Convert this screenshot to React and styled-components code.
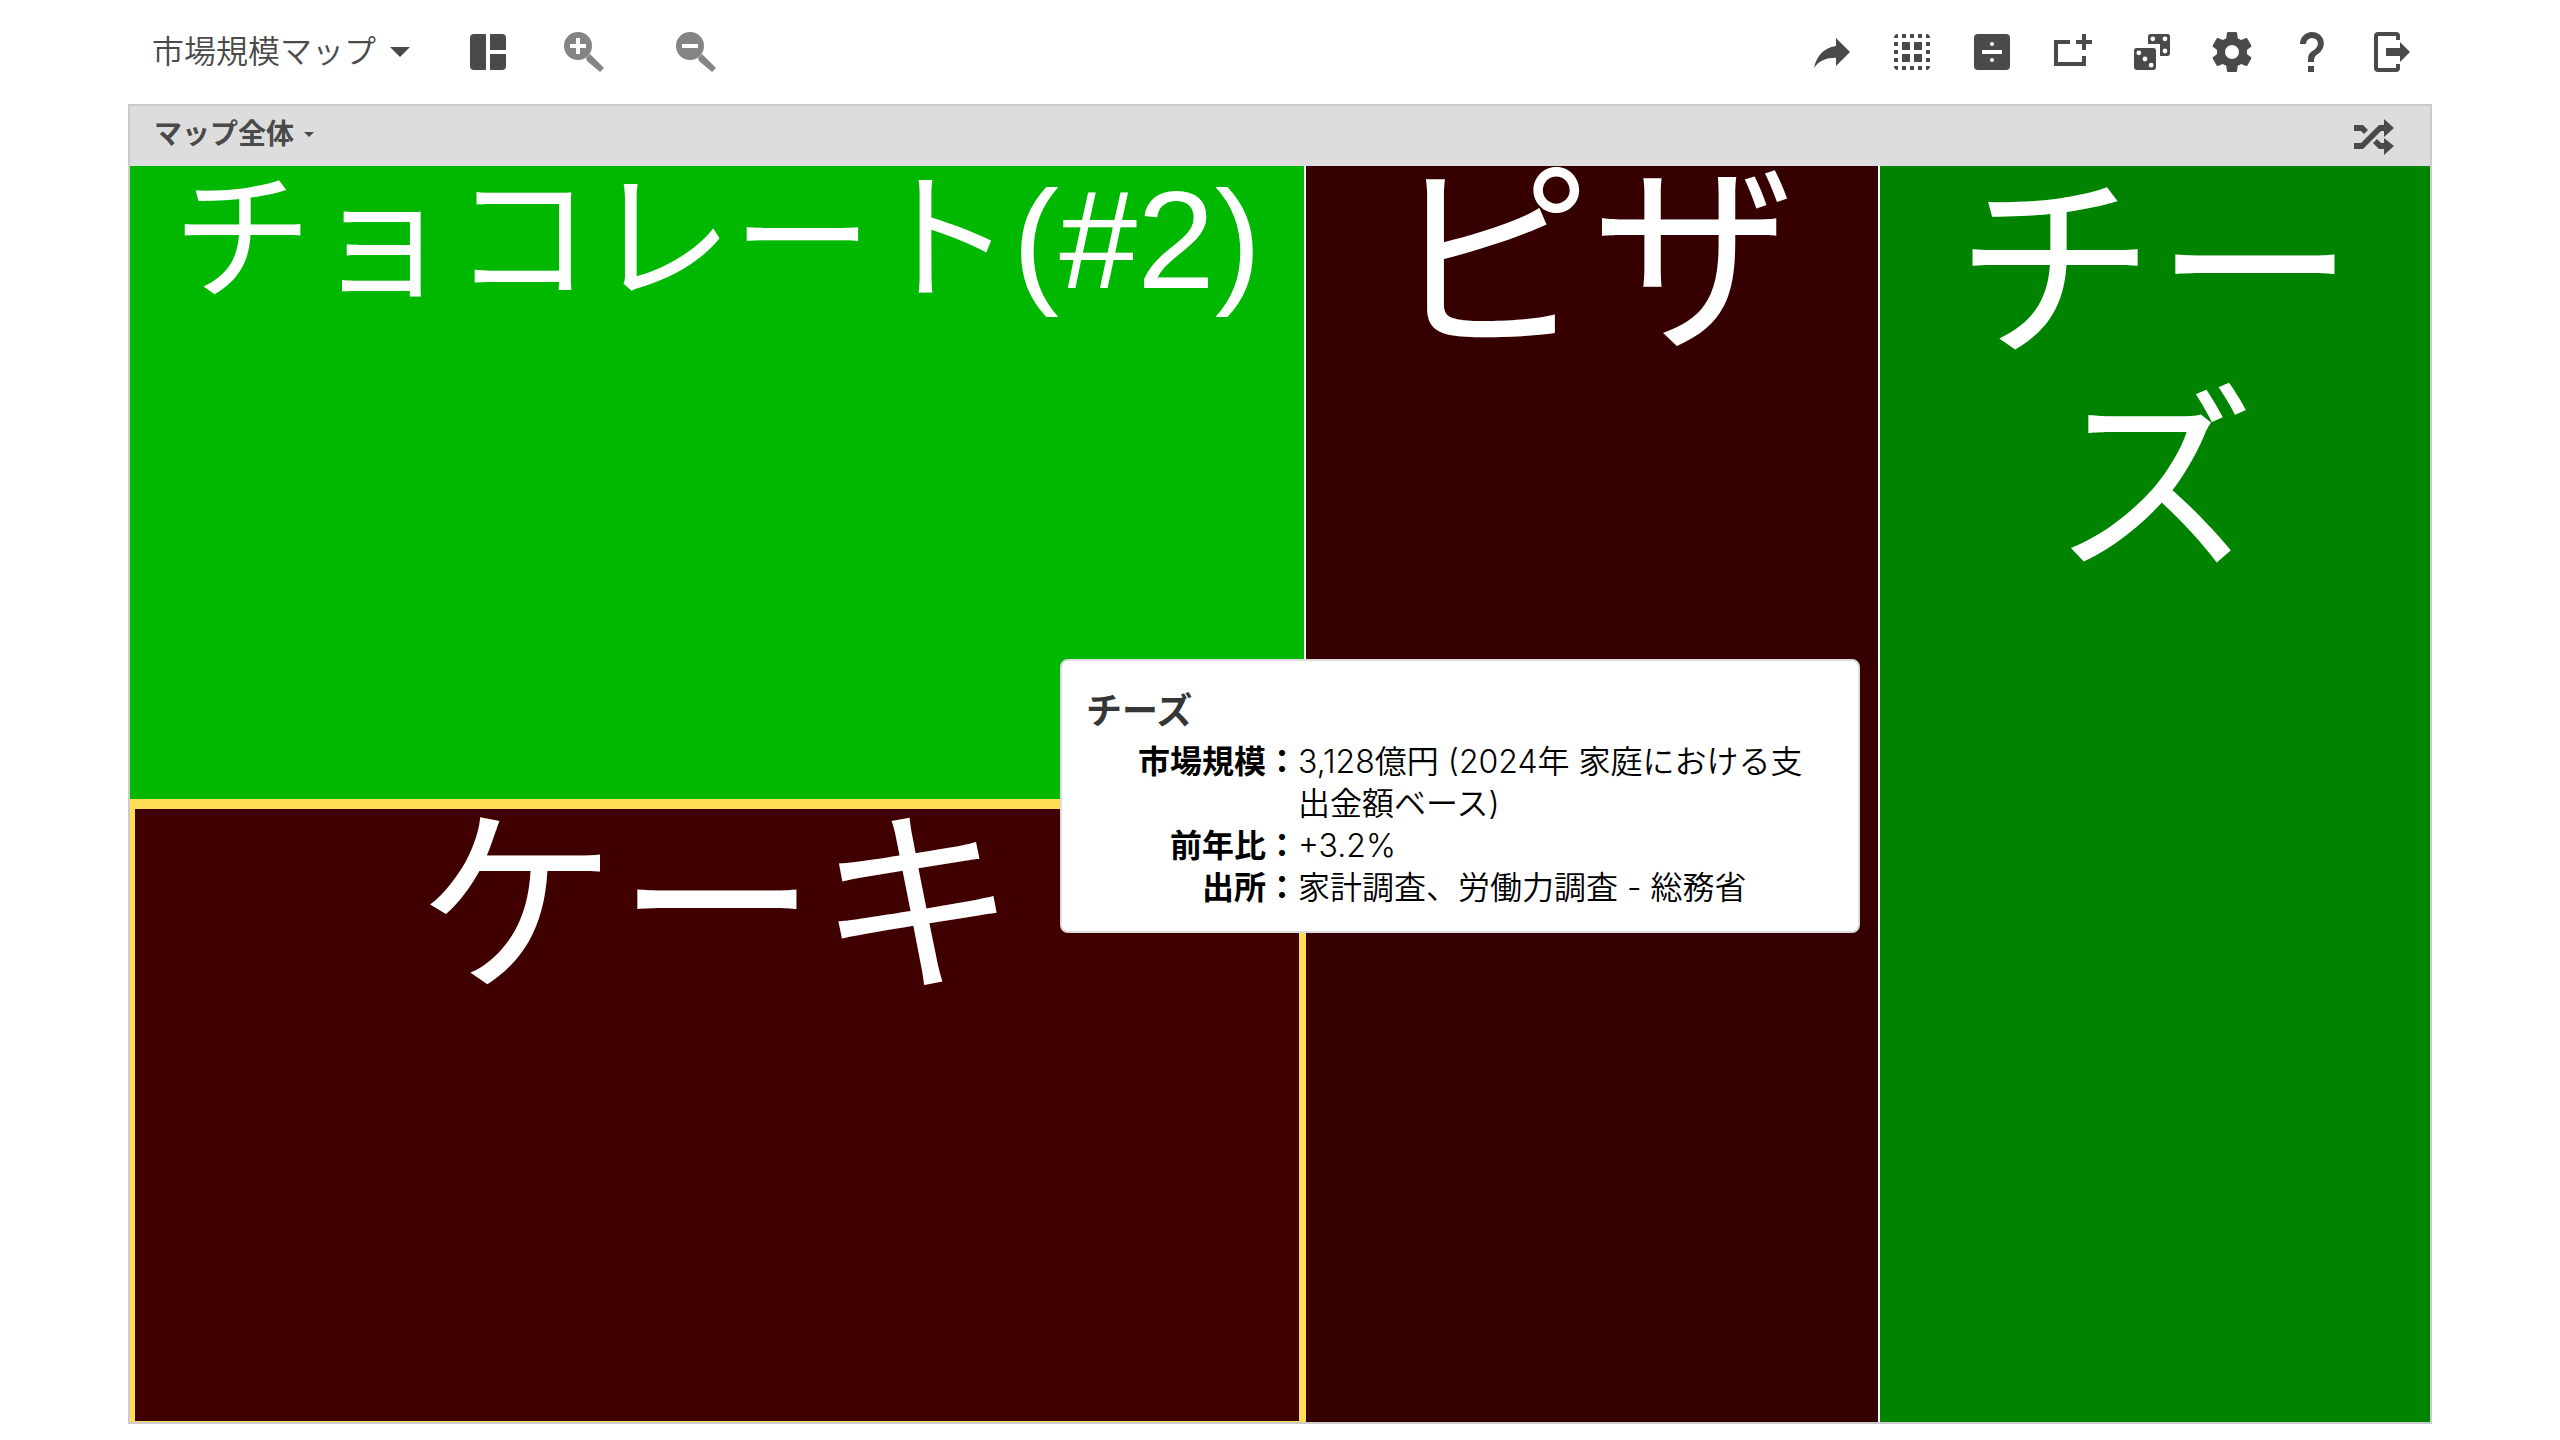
import React, { useState } from 'react';
import styled, { createGlobalStyle } from 'styled-components';

const GlobalStyle = createGlobalStyle`
  * {
    box-sizing: border-box;
  }

  body {
    margin: 0;
    background: #fff;
    color: #4a4a4a;
    font-family: Inter, 'Noto Sans CJK JP', sans-serif;
  }
`;

const Page = styled.div`
  display: flex;
  flex-direction: column;
  width: 90%;
  height: 100vh;
  margin: 0 auto;
  padding-bottom: 16px;
`;

const Toolbar = styled.header`
  display: flex;
  flex: none;
  align-items: center;
  justify-content: space-between;
  height: 104px;
  padding: 0 16px 0 24px;
`;

const ToolGroup = styled.div`
  display: flex;
  align-items: center;
  gap: ${(props) => props.$gap || 0}px;
`;

const PlainButton = styled.button`
  display: flex;
  align-items: center;
  padding: 0;
  border: none;
  background: none;
  color: inherit;
  font-family: inherit;
  cursor: pointer;
`;

const TitleButton = styled(PlainButton)`
  gap: 14px;
  margin-right: 54px;
  font-size: 32px;
  font-weight: 350;
  line-height: 48px;
`;

const IconButton = styled(PlainButton)`
  color: ${(props) => (props.$muted ? '#848484' : '#4a4a4a')};
`;

const Caret = styled.span`
  border: ${(props) => props.$size}px solid transparent;
  border-top-color: currentColor;
  border-bottom: none;
`;

const Frame = styled.main`
  display: flex;
  flex: 1;
  flex-direction: column;
  min-height: 0;
  border: 2px solid #ccc;
`;

const FrameHeader = styled.div`
  display: flex;
  flex: none;
  align-items: center;
  justify-content: space-between;
  height: 60px;
  padding: 0 32px 0 24px;
  background: #ddd;
`;

const ScopeButton = styled(PlainButton)`
  gap: 10px;
  padding-bottom: 4px;
  font-size: 28px;
  font-weight: 700;
  line-height: 40px;
`;

const TreeMap = styled.div`
  position: relative;
  display: grid;
  flex: 1;
  grid-template-columns: 1176fr 574fr 550fr;
  min-height: 0;
`;

const Column = styled.div`
  display: grid;
  grid-template-rows: 633fr 623fr;
  min-height: 0;
`;

const Tile = styled.button`
  display: flex;
  align-items: flex-start;
  justify-content: center;
  min-width: 0;
  min-height: 0;
  padding: 0 ${(props) => props.$inset || 0}px;
  border: 0 solid #fff;
  border-right-width: ${(props) => (props.$last ? 0 : 2)}px;
  background: ${(props) => props.$color};
  color: #fff;
  font-family: 'Liberation Sans', 'Noto Sans CJK JP', sans-serif;
  font-size: ${(props) => props.$size}px;
  font-weight: 400;
  line-height: ${(props) => props.$line}px;
  text-align: center;
  word-break: break-all;
  cursor: pointer;
`;

const SelectedTile = styled(Tile)`
  border-color: #ffdd57;
  border-width: 10px 7px 1px 5px;
`;

const Tooltip = styled.section`
  position: absolute;
  top: 493px;
  left: 930px;
  width: 800px;
  padding: 24px 24px 22px;
  border: 2px solid #ddd;
  border-radius: 8px;
  background: #fff;
  color: #000;
`;

const TooltipTitle = styled.h2`
  margin: 0 0 4px;
  color: #363636;
  font-size: 36px;
  font-weight: 700;
  line-height: 52px;
`;

const Facts = styled.dl`
  display: grid;
  grid-template-columns: 212px 1fr;
  margin: 0;
  font-size: 32px;
  line-height: 42px;

  dt {
    font-weight: 700;
    text-align: right;
  }

  dd {
    margin: 0;
    font-weight: 350;
  }
`;

const icons = {
  layout: <path d="M5 3H11V21H5A2 2 0 0 1 3 19V5A2 2 0 0 1 5 3M13 3H19A2 2 0 0 1 21 5V11H13V3M13 13H21V19A2 2 0 0 1 19 21H13V13Z" />,
  share: <path d="M21 12L14 5V9C7 10 4 15 3 20C5.5 16.4 9 14.9 14 14.9V19L21 12Z" />,
  selectAll: (
    <path d="M5 3V5H3A2 2 0 0 1 5 3M7 3H9V5H7V3M11 3H13V5H11V3M15 3H17V5H15V3M19 3A2 2 0 0 1 21 5H19V3M3 7H5V9H3V7M19 7H21V9H19V7M3 11H5V13H3V11M19 11H21V13H19V11M3 15H5V17H3V15M19 15H21V17H19V15M3 19H5V21A2 2 0 0 1 3 19M7 19H9V21H7V19M11 19H13V21H11V19M15 19H17V21H15V19M19 19H21A2 2 0 0 1 19 21V19M7 7H11V11H7V7M13 7H17V11H13V7M7 13H11V17H7V13M13 13H17V17H13V13Z" />
  ),
  divide: (
    <path d="M5 3H19A2 2 0 0 1 21 5V19A2 2 0 0 1 19 21H5A2 2 0 0 1 3 19V5A2 2 0 0 1 5 3M7 11V13H17V11H7M12 7A1 1 0 0 0 12 9A1 1 0 0 0 12 7M12 15A1 1 0 0 0 12 17A1 1 0 0 0 12 15Z" />
  ),
  addArea: <path d="M19 6H22V8H19V11H17V8H14V6H17V3H19V6M17 17V14H19V19H3V6H11V8H5V17H17Z" />,
  dice: (
    <path d="M11.2 3H19.8A1.2 1.2 0 0 1 21 4.2V12.8A1.2 1.2 0 0 1 19.8 14H16V8H10V4.2A1.2 1.2 0 0 1 11.2 3M12.4 4.2A1.2 1.2 0 0 0 12.4 6.6A1.2 1.2 0 0 0 12.4 4.2M18.5 4.2A1.2 1.2 0 0 0 18.5 6.6A1.2 1.2 0 0 0 18.5 4.2M18.5 10.3A1.2 1.2 0 0 0 18.5 12.7A1.2 1.2 0 0 0 18.5 10.3M4.2 10H12.8A1.2 1.2 0 0 1 14 11.2V19.8A1.2 1.2 0 0 1 12.8 21H4.2A1.2 1.2 0 0 1 3 19.8V11.2A1.2 1.2 0 0 1 4.2 10M5.4 11.2A1.2 1.2 0 0 0 5.4 13.6A1.2 1.2 0 0 0 5.4 11.2M8.5 14.3A1.2 1.2 0 0 0 8.5 16.7A1.2 1.2 0 0 0 8.5 14.3M11.6 17.4A1.2 1.2 0 0 0 11.6 19.8A1.2 1.2 0 0 0 11.6 17.4Z" />
  ),
  settings: (
    <path d="M12,15.5A3.5,3.5 0 0,1 8.5,12A3.5,3.5 0 0,1 12,8.5A3.5,3.5 0 0,1 15.5,12A3.5,3.5 0 0,1 12,15.5M19.43,12.97C19.47,12.65 19.5,12.33 19.5,12C19.5,11.67 19.47,11.34 19.43,11L21.54,9.37C21.73,9.22 21.78,8.95 21.66,8.73L19.66,5.27C19.54,5.05 19.27,4.96 19.05,5.05L16.56,6.05C16.04,5.66 15.5,5.32 14.87,5.07L14.5,2.42C14.46,2.18 14.25,2 14,2H10C9.75,2 9.54,2.18 9.5,2.42L9.13,5.07C8.5,5.32 7.96,5.66 7.44,6.05L4.95,5.05C4.73,4.96 4.46,5.05 4.34,5.27L2.34,8.73C2.21,8.95 2.27,9.22 2.46,9.37L4.57,11C4.53,11.34 4.5,11.67 4.5,12C4.5,12.33 4.53,12.65 4.57,12.97L2.46,14.63C2.27,14.78 2.21,15.05 2.34,15.27L4.34,18.73C4.46,18.95 4.73,19.03 4.95,18.95L7.44,17.94C7.96,18.34 8.5,18.68 9.13,18.93L9.5,21.58C9.54,21.82 9.75,22 10,22H14C14.25,22 14.46,21.82 14.5,21.58L14.87,18.93C15.5,18.67 16.04,18.34 16.56,17.94L19.05,18.95C19.27,19.03 19.54,18.95 19.66,18.73L21.66,15.27C21.78,15.05 21.73,14.78 21.54,14.63L19.43,12.97Z" />
  ),
  help: (
    <path d="M10 19H13V22H10V19M12 2C17.35 2.22 19.68 7.62 16.5 11.67C15.67 12.67 14.33 13.33 13.67 14.17C13 15 13 16 13 17H10C10 15.33 10 13.92 10.67 12.92C11.33 11.92 12.67 11.33 13.5 10.67C15.92 8.43 15.32 5.26 12 5A3 3 0 0 0 9 8H6A6 6 0 0 1 12 2Z" />
  ),
  logout: (
    <path d="M16 17V14H9V10H16V7L21 12L16 17M14 2A2 2 0 0 1 16 4V6H14V4H5V20H14V18H16V20A2 2 0 0 1 14 22H5A2 2 0 0 1 3 20V4A2 2 0 0 1 5 2H14Z" />
  ),
  zoomIn: (
    <>
      <path d="M16 4A14 14 0 1 0 16 32A14 14 0 0 0 16 4M14 10H18V16H24V20H18V26H14V20H8V16H14Z" />
      <path d="M24 30L28 26L42 40L38 44L25 33Z" />
    </>
  ),
  zoomOut: (
    <>
      <path d="M16 4A14 14 0 1 0 16 32A14 14 0 0 0 16 4M8 16H24V20H8Z" />
      <path d="M24 30L28 26L42 40L38 44L25 33Z" />
    </>
  ),
  shuffle: (
    <path d="M4 13H13L18 18L14 22L11 19H4ZM4 31H11L29 13H34V7L44 16L34 25V19H31L13 37H4ZM27 27L31 31H34V26L44 34L34 43V37H29L23 31Z" />
  ),
};

const Icon = ({ name, box = 24 }) => (
  <svg width="48" height="48" viewBox={`0 0 ${box} ${box}`} fill="currentColor" fillRule="evenodd" aria-hidden="true">
    {icons[name]}
  </svg>
);

const actions = [
  { icon: 'share', label: '共有' },
  { icon: 'selectAll', label: 'すべて選択' },
  { icon: 'divide', label: '分割' },
  { icon: 'addArea', label: '領域を追加' },
  { icon: 'dice', label: 'ランダム' },
  { icon: 'settings', label: '設定' },
  { icon: 'help', label: 'ヘルプ' },
  { icon: 'logout', label: 'ログアウト' },
];

const facts = [
  { term: '市場規模', value: '3,128億円 (2024年 家庭における支出金額ベース)' },
  { term: '前年比', value: '+3.2%' },
  { term: '出所', value: '家計調査、労働力調査 - 総務省' },
];

const App = () => {
  const [showTooltip, setShowTooltip] = useState(true);

  return (
    <>
      <GlobalStyle />
      <Page>
        <Toolbar>
          <ToolGroup>
            <TitleButton type="button">
              市場規模マップ
              <Caret $size={10} />
            </TitleButton>
            <ToolGroup $gap={50}>
              <IconButton type="button" aria-label="レイアウト">
                <Icon name="layout" />
              </IconButton>
              <ToolGroup $gap={64}>
                <IconButton type="button" $muted aria-label="拡大">
                  <Icon name="zoomIn" box={48} />
                </IconButton>
                <IconButton type="button" $muted aria-label="縮小">
                  <Icon name="zoomOut" box={48} />
                </IconButton>
              </ToolGroup>
            </ToolGroup>
          </ToolGroup>
          <ToolGroup $gap={32}>
            {actions.map((action) => (
              <IconButton key={action.icon} type="button" aria-label={action.label}>
                <Icon name={action.icon} />
              </IconButton>
            ))}
          </ToolGroup>
        </Toolbar>
        <Frame>
          <FrameHeader>
            <ScopeButton type="button">
              マップ全体
              <Caret $size={5} />
            </ScopeButton>
            <IconButton type="button" aria-label="シャッフル">
              <Icon name="shuffle" box={48} />
            </IconButton>
          </FrameHeader>
          <TreeMap>
            <Column>
              <Tile type="button" $color="#00b800" $size={140} $line={148}>
                チョコレート(#2)
              </Tile>
              <SelectedTile type="button" $color="#400000" $size={200} $line={196}>
                ケーキ
              </SelectedTile>
            </Column>
            <Tile type="button" $color="#360000" $size={204} $line={192}>
              ピザ
            </Tile>
            <Tile
              type="button"
              $color="#008400"
              $size={200}
              $line={212}
              $inset={40}
              $last
              onClick={() => setShowTooltip(!showTooltip)}
            >
              チーズ
            </Tile>
            {showTooltip && (
              <Tooltip role="tooltip">
                <TooltipTitle>チーズ</TooltipTitle>
                <Facts>
                  {facts.map((fact) => (
                    <React.Fragment key={fact.term}>
                      <dt>{fact.term}：</dt>
                      <dd>{fact.value}</dd>
                    </React.Fragment>
                  ))}
                </Facts>
              </Tooltip>
            )}
          </TreeMap>
        </Frame>
      </Page>
    </>
  );
};

export default App;
